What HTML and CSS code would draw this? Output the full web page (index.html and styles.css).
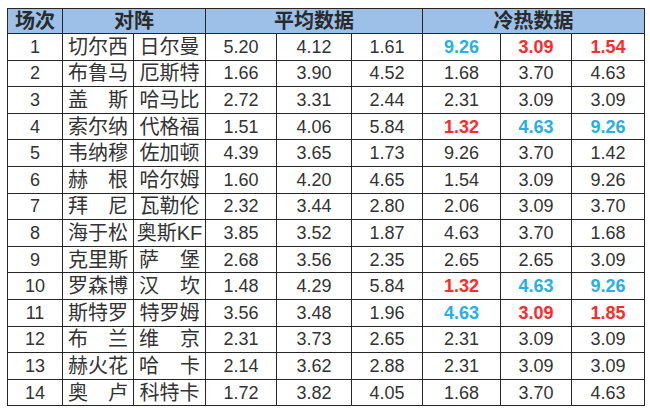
FILE: index.html
```html
<!DOCTYPE html>
<html lang="zh">
<head>
<meta charset="utf-8">
<link rel="stylesheet" href="styles.css">
</head>
<body>
<table class="odds">
  <colgroup>
    <col class="c-no"><col class="c-team"><col class="c-team2">
    <col class="c-a1"><col class="c-a2"><col class="c-a3">
    <col class="c-h1"><col class="c-h2"><col class="c-h3">
  </colgroup>
  <thead>
    <tr><th>场次</th><th colspan="2">对阵</th><th colspan="3">平均数据</th><th colspan="3">冷热数据</th></tr>
  </thead>
  <tbody>
    <tr><td>1</td><td class="nm">切尔西</td><td class="nm">日尔曼</td><td>5.20</td><td>4.12</td><td>1.61</td><td class="b">9.26</td><td class="r">3.09</td><td class="r">1.54</td></tr>
    <tr><td>2</td><td class="nm">布鲁马</td><td class="nm">厄斯特</td><td>1.66</td><td>3.90</td><td>4.52</td><td>1.68</td><td>3.70</td><td>4.63</td></tr>
    <tr><td>3</td><td class="nm"><span class="sp"><span>盖</span><span>斯</span></span></td><td class="nm">哈马比</td><td>2.72</td><td>3.31</td><td>2.44</td><td>2.31</td><td>3.09</td><td>3.09</td></tr>
    <tr><td>4</td><td class="nm">索尔纳</td><td class="nm">代格福</td><td>1.51</td><td>4.06</td><td>5.84</td><td class="r">1.32</td><td class="b">4.63</td><td class="b">9.26</td></tr>
    <tr><td>5</td><td class="nm">韦纳穆</td><td class="nm">佐加顿</td><td>4.39</td><td>3.65</td><td>1.73</td><td>9.26</td><td>3.70</td><td>1.42</td></tr>
    <tr><td>6</td><td class="nm"><span class="sp"><span>赫</span><span>根</span></span></td><td class="nm">哈尔姆</td><td>1.60</td><td>4.20</td><td>4.65</td><td>1.54</td><td>3.09</td><td>9.26</td></tr>
    <tr><td>7</td><td class="nm"><span class="sp"><span>拜</span><span>尼</span></span></td><td class="nm">瓦勒伦</td><td>2.32</td><td>3.44</td><td>2.80</td><td>2.06</td><td>3.09</td><td>3.70</td></tr>
    <tr><td>8</td><td class="nm">海于松</td><td class="nm">奥斯KF</td><td>3.85</td><td>3.52</td><td>1.87</td><td>4.63</td><td>3.70</td><td>1.68</td></tr>
    <tr><td>9</td><td class="nm">克里斯</td><td class="nm"><span class="sp"><span>萨</span><span>堡</span></span></td><td>2.68</td><td>3.56</td><td>2.35</td><td>2.65</td><td>2.65</td><td>3.09</td></tr>
    <tr><td>10</td><td class="nm">罗森博</td><td class="nm"><span class="sp"><span>汉</span><span>坎</span></span></td><td>1.48</td><td>4.29</td><td>5.84</td><td class="r">1.32</td><td class="b">4.63</td><td class="b">9.26</td></tr>
    <tr><td>11</td><td class="nm">斯特罗</td><td class="nm">特罗姆</td><td>3.56</td><td>3.48</td><td>1.96</td><td class="b">4.63</td><td class="r">3.09</td><td class="r">1.85</td></tr>
    <tr><td>12</td><td class="nm"><span class="sp"><span>布</span><span>兰</span></span></td><td class="nm"><span class="sp"><span>维</span><span>京</span></span></td><td>2.31</td><td>3.73</td><td>2.65</td><td>2.31</td><td>3.09</td><td>3.09</td></tr>
    <tr><td>13</td><td class="nm">赫火花</td><td class="nm"><span class="sp"><span>哈</span><span>卡</span></span></td><td>2.14</td><td>3.62</td><td>2.88</td><td>2.31</td><td>3.09</td><td>3.09</td></tr>
    <tr><td>14</td><td class="nm"><span class="sp"><span>奥</span><span>卢</span></span></td><td class="nm">科特卡</td><td>1.72</td><td>3.82</td><td>4.05</td><td>1.68</td><td>3.70</td><td>4.63</td></tr>
  </tbody>
</table>
</body>
</html>
```
FILE: styles.css
```css
html, body {
  margin: 0;
  padding: 0;
  background: #ffffff;
}
body {
  padding: 8px 0 0 7px;
  font-family: "Liberation Sans", "Noto Sans CJK SC", sans-serif;
  color: #333333;
}
.odds {
  border-collapse: collapse;
  table-layout: fixed;
  width: 637px;
  border: 1px solid #1e1e1e;
}
.c-no { width: 55px; }
.c-team { width: 71px; }
.c-team2 { width: 72px; }
.c-a1 { width: 71px; }
.c-a2 { width: 75px; }
.c-a3 { width: 71px; }
.c-h1 { width: 78px; }
.c-h2 { width: 71px; }
.c-h3 { width: 73px; }
.odds th, .odds td {
  border: 1px solid #262626;
  padding: 0;
  text-align: center;
  vertical-align: middle;
  white-space: nowrap;
  overflow: hidden;
}
.odds th {
  height: 24px;
  background: #9cc0e8;
  font-size: 20px;
  font-weight: bold;
  color: #2a2a2a;
  line-height: 24px;
}
.odds td {
  height: 25.6px;
  font-size: 18px;
  line-height: 24px;
}
.odds td.nm {
  font-size: 20px;
  padding: 0 2px;
}
.sp {
  display: flex;
  justify-content: space-between;
  padding: 0 3px;
}
.odds td.b {
  color: #25b0e8;
  font-weight: bold;
}
.odds td.r {
  color: #ff2a2a;
  font-weight: bold;
}
```
